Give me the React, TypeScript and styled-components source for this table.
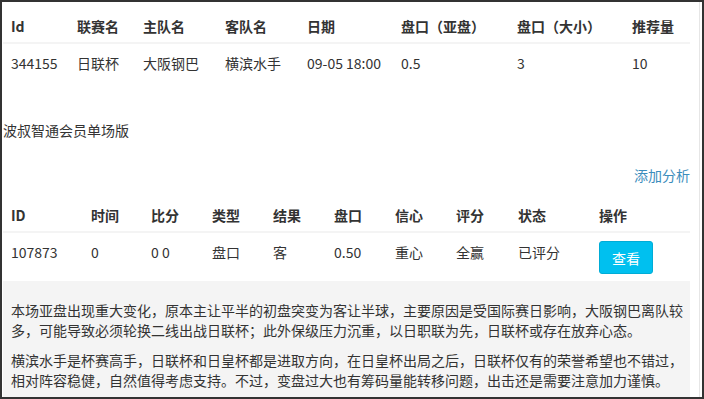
import styled, { createGlobalStyle } from "styled-components";

const GlobalStyle = createGlobalStyle`
  html, body {
    margin: 0;
    padding: 0;
    background: #fff;
  }
  body {
    font-family: "Noto Sans CJK SC", "Open Sans", sans-serif;
    font-size: 14px;
    line-height: 20px;
    color: #333;
  }
`;

const matchCols = [66, 66, 82, 82, 94, 116, 115, 66];
const analysisCols = [80, 60, 61, 61, 61, 61, 61, 62, 81, 99];

export default function App() {
  return (
    <>
      <GlobalStyle />
      <Frame>
        <Content>
          <DataTable>
            <colgroup>
              {matchCols.map((w, i) => (
                <col key={i} style={{ width: w }} />
              ))}
            </colgroup>
            <thead>
              <tr>
                <Th>Id</Th>
                <Th>联赛名</Th>
                <Th>主队名</Th>
                <Th>客队名</Th>
                <Th>日期</Th>
                <Th>盘口（亚盘）</Th>
                <Th>盘口（大小）</Th>
                <Th>推荐量</Th>
              </tr>
            </thead>
            <tbody>
              <tr>
                <Td>344155</Td>
                <Td>日联杯</Td>
                <Td>大阪钢巴</Td>
                <Td>横滨水手</Td>
                <Td>09-05 18:00</Td>
                <Td>0.5</Td>
                <Td>3</Td>
                <Td>10</Td>
              </tr>
            </tbody>
          </DataTable>

          <SectionTitle>波叔智通会员单场版</SectionTitle>

          <Toolbar>
            <AddLink>添加分析</AddLink>
          </Toolbar>

          <DataTable>
            <colgroup>
              {analysisCols.map((w, i) => (
                <col key={i} style={{ width: w }} />
              ))}
            </colgroup>
            <thead>
              <tr>
                <Th>ID</Th>
                <Th>时间</Th>
                <Th>比分</Th>
                <Th>类型</Th>
                <Th>结果</Th>
                <Th>盘口</Th>
                <Th>信心</Th>
                <Th>评分</Th>
                <Th>状态</Th>
                <Th>操作</Th>
              </tr>
            </thead>
            <tbody>
              <tr>
                <Td>107873</Td>
                <Td>0</Td>
                <Td>0 0</Td>
                <Td>盘口</Td>
                <Td>客</Td>
                <Td>0.50</Td>
                <Td>重心</Td>
                <Td>全赢</Td>
                <Td>已评分</Td>
                <Td>
                  <ViewButton>查看</ViewButton>
                </Td>
              </tr>
            </tbody>
          </DataTable>

          <AnalysisBox>
            <p>
              本场亚盘出现重大变化，原本主让平半的初盘突变为客让半球，主要原因是受国际赛日影响，大阪钢巴离队较多，可能导致必须轮换二线出战日联杯；此外保级压力沉重，以日职联为先，日联杯或存在放弃心态。
            </p>
            <p>
              横滨水手是杯赛高手，日联杯和日皇杯都是进取方向，在日皇杯出局之后，日联杯仅有的荣誉希望也不错过，相对阵容稳健，自然值得考虑支持。不过，变盘过大也有筹码量能转移问题，出击还是需要注意加力谨慎。
            </p>
          </AnalysisBox>
        </Content>
        <Gutter />
      </Frame>
    </>
  );
}

const Frame = styled.div`
  width: 704px;
  height: 399px;
  box-sizing: border-box;
  border: 2px solid #333;
  display: flex;
  overflow: hidden;
`;

const Content = styled.div`
  width: 687px;
  margin-left: 1px;
  flex-shrink: 0;
`;

const Gutter = styled.div`
  flex: 1;
  margin-left: 9px;
  border-left: 1px solid #e6e6e6;
`;

const DataTable = styled.table`
  width: 687px;
  table-layout: fixed;
  border-collapse: collapse;
  border-spacing: 0;
`;

const Th = styled.th`
  text-align: left;
  font-weight: bold;
  padding: 14px 8px 6px;
  line-height: 20px;
  border-bottom: 2px solid #f4f4f4;
  white-space: nowrap;
`;

const Td = styled.td`
  padding: 9px 8px 7px;
  line-height: 20px;
  vertical-align: top;
  white-space: nowrap;
`;

const SectionTitle = styled.div`
  margin-top: 40px;
  line-height: 20px;
`;

const Toolbar = styled.div`
  display: flex;
  justify-content: flex-end;
  margin: 25px 0 6px;
`;

const AddLink = styled.a`
  color: #3c8dbc;
  line-height: 20px;
  cursor: pointer;
`;

const ViewButton = styled.button`
  display: block;
  width: 54px;
  height: 33px;
  margin-top: -1px;
  padding: 0;
  border: 1px solid #00acd6;
  border-radius: 3px;
  background: #00c0ef;
  color: #fff;
  font-family: inherit;
  font-size: 14px;
  cursor: pointer;
`;

const AnalysisBox = styled.div`
  background: #f4f4f4;
  padding: 9px 4px 9px 8px;
  height: 200px;

  p {
    margin: 10px 0;
    line-height: 20px;
  }
`;
